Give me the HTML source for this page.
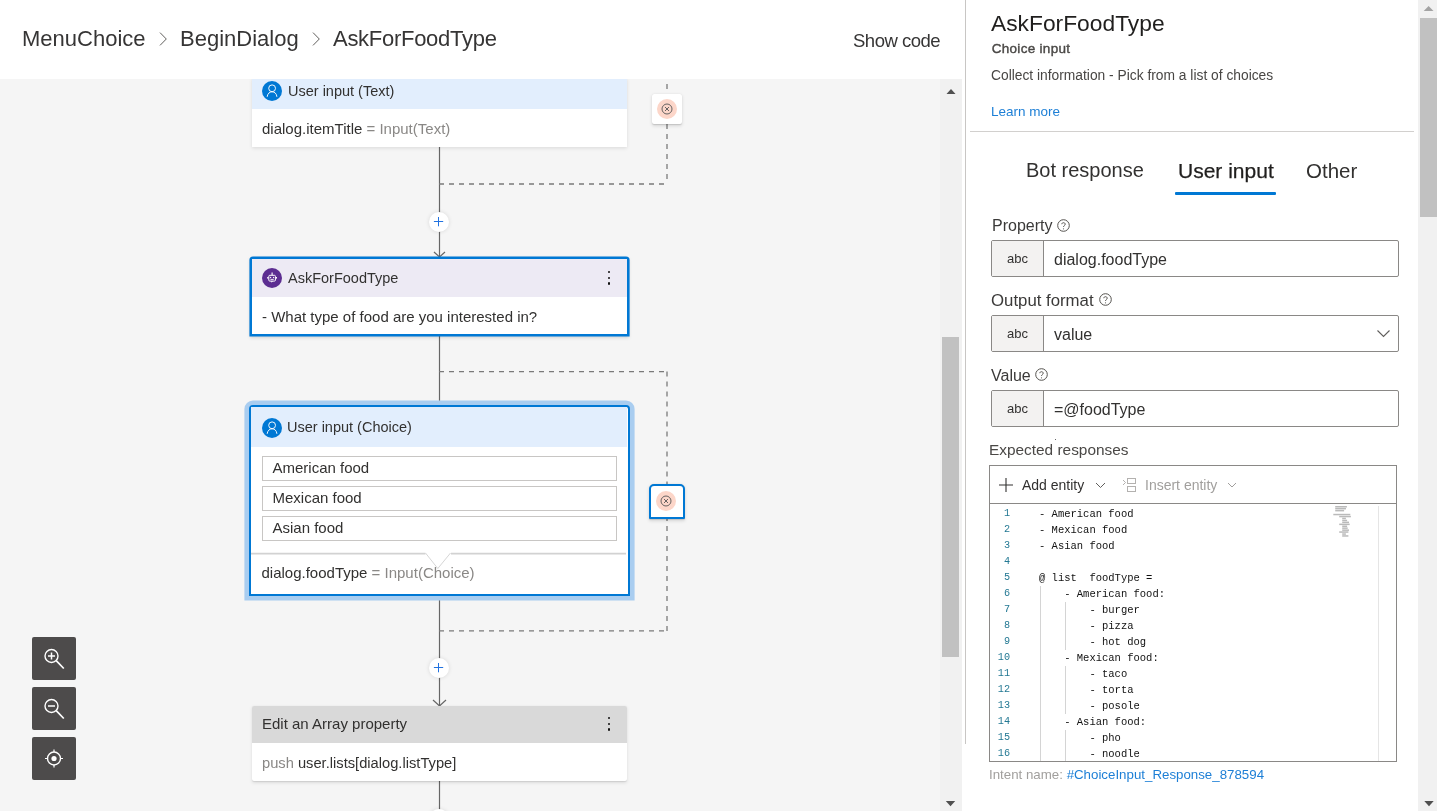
<!DOCTYPE html>
<html><head><meta charset="utf-8">
<style>
*{box-sizing:border-box;margin:0;padding:0}
body{will-change:transform} html,body{width:1437px;height:811px;overflow:hidden;background:#fff;font-family:"Liberation Sans",sans-serif;color:#323130}
.abs{position:absolute}
#header{left:0;top:0;width:965px;height:79px;background:#fff}
.crumb{position:absolute;top:25px;font-size:22px;color:#363535;white-space:nowrap;line-height:28px}
.chev{position:absolute;top:31.5px;width:8px;height:14px}
#canvas{left:0;top:79px;width:962px;height:732px;background:#f5f5f5;overflow:hidden}
.node{position:absolute;background:#fff;box-shadow:0 1.6px 3.6px rgba(0,0,0,.1),0 .3px .9px rgba(0,0,0,.08)}
.nh{position:absolute;left:0;right:0;top:0;font-size:14.5px;white-space:nowrap}
.nb{position:absolute;left:0;right:0;font-size:15px;white-space:nowrap}
.ic{position:absolute;width:20px;height:20px;border-radius:50%}
.dots{position:absolute;width:3px}
.dots i{display:block;width:2.4px;height:2.4px;border-radius:50%;background:#111;margin-bottom:3.2px}
.gray{color:#8a8886}
.choice{position:absolute;left:10.5px;width:355px;height:25px;border:1px solid #c8c6c4;font-size:15px;padding-left:10px;line-height:23px}
.plus{position:absolute;width:20px;height:20px;border-radius:50%;background:#fff;box-shadow:0 0 4px rgba(0,0,0,.12)}
.exc{position:absolute;width:30px;height:30px;background:#fff;border-radius:2px;box-shadow:0 1.6px 3.6px rgba(0,0,0,.13),0 .3px .9px rgba(0,0,0,.11)}
.zbtn{position:absolute;left:32px;width:44px;height:43px;background:#4d4b4b;border-radius:2px}
#panel{left:965px;top:0;width:472px;height:811px;background:#fff}
.lbl{position:absolute;font-size:16px;color:#3b3a39;white-space:nowrap}
.inp{position:absolute;left:26px;width:408px;height:37px;border:1px solid #8a8886;border-radius:2px;background:#fff}
.inp .pre{position:absolute;left:0;top:0;bottom:0;width:52px;background:#f3f2f1;border-right:1px solid #8a8886;font-size:13px;color:#323130;text-align:center;line-height:36px}
.inp .val{position:absolute;left:62px;top:0;font-size:16px;line-height:38px;white-space:nowrap}
.help{display:inline-block;position:absolute;width:13px;height:13px}
.code{position:absolute;font-family:"Liberation Mono",monospace;font-size:10.5px;line-height:16px;white-space:pre;color:#111}
.ln{position:absolute;font-family:"Liberation Mono",monospace;font-size:10.2px;line-height:16px;white-space:pre;color:#237893;text-align:right}
</style></head>
<body>
<div id="header" class="abs">
  <div class="crumb" style="left:22px">MenuChoice</div>
  <svg class="chev" style="left:159px" viewBox="0 0 8 14"><path d="M1 0.6 L7.3 7 L1 13.4" fill="none" stroke="#605e5c" stroke-width="1"/></svg>
  <div class="crumb" style="left:180px">BeginDialog</div>
  <svg class="chev" style="left:312px" viewBox="0 0 8 14"><path d="M1 0.6 L7.3 7 L1 13.4" fill="none" stroke="#605e5c" stroke-width="1"/></svg>
  <div class="crumb" style="left:333px;letter-spacing:-0.28px">AskForFoodType</div>
  <div class="abs" style="left:853px;top:29.5px;font-size:18.5px;letter-spacing:-0.5px;color:#363535;white-space:nowrap">Show code</div>
</div>

<div id="canvas" class="abs">
  <!-- connectors (coords relative to canvas: y-79) -->
  <svg class="abs" style="left:0;top:0" width="962" height="732">
    <g stroke="#666" stroke-width="1.2" fill="none">
      <path d="M439.5 68 V178"/>
      <path d="M434 173 L439.5 178 L445 173"/>
      <path d="M439.5 257 V326"/>
      <path d="M439.5 517 V627"/>
      <path d="M433 621 L439.5 627 L446 621"/>
      <path d="M439.5 702 V732"/>
    </g>
    <g stroke="#7a7a7a" stroke-width="1.3" fill="none" stroke-dasharray="5 5">
      <path d="M439 105 H667"/>
      <path d="M667 105 V0" stroke-dashoffset="5"/>
      <path d="M439 292.6 H667"/>
      <path d="M667 292.6 V422"/>
      <path d="M667 552 V422"/>
      <path d="M439 551.8 H667"/>
    </g>
  </svg>

  <!-- Node 1: User input (Text) -->
  <div class="node" style="left:252px;top:-2px;width:375px;height:70px">
    <div class="nh" style="height:32px;background:#e2eefd">
      <div class="ic" style="left:10px;top:4px;background:#0078d4">
        <svg width="20" height="20" viewBox="0 0 20 20"><circle cx="10.1" cy="7.3" r="3.4" fill="none" stroke="#fff" stroke-width=".95"/><path d="M5.2 15.8 C5.5 12.6 7.6 10.8 10.1 10.8 C12.6 10.8 14.6 12.6 14.9 15.8" fill="none" stroke="#fff" stroke-width=".95"/></svg>
      </div>
      <div class="abs" style="left:36px;top:5px;line-height:18px">User input (Text)</div>
    </div>
    <div class="nb" style="top:33px;height:37px;padding-left:10px;line-height:38px">dialog.itemTitle <span class="gray">= Input(Text)</span></div>
  </div>
  <div class="exc" style="left:652px;top:15px">
    <div class="abs" style="left:5px;top:5px;width:20px;height:20px;border-radius:50%;background:#fcd6c9"></div>
    <svg class="abs" style="left:5px;top:5px" width="20" height="20" viewBox="0 0 20 20"><circle cx="10" cy="10" r="5" fill="none" stroke="#555" stroke-width="0.9"/><path d="M8 8 L12 12 M12 8 L8 12" stroke="#555" stroke-width="0.9"/></svg>
  </div>

  <!-- plus 1 -->
  <div class="plus" style="left:429px;top:133px">
    <svg width="20" height="20" viewBox="0 0 20 20"><path d="M9.5 5 V14.3 M4.9 9.5 H14.2" stroke="#2172e0" stroke-width="1"/></svg>
  </div>

  <!-- Node 2: AskForFoodType -->
  <div class="node" style="left:250px;top:178px;width:379px;height:79px;border:2px solid #0078d4;border-radius:3px 3px 0 0;box-shadow:0 0 0 .6px #0078d4,0 1.6px 3.6px rgba(0,0,0,.13)">
    <div class="nh" style="height:38px;background:#edeaf4">
      <div class="ic" style="left:10px;top:9px;background:#5c2d91">
        <svg width="20" height="20" viewBox="0 0 20 20"><rect x="6.8" y="7.3" width="6.6" height="5.8" rx="1" fill="none" stroke="#fff" stroke-width="1"/><path d="M10.1 4.6 V7.3" stroke="#fff" stroke-width="1.1"/><circle cx="8.6" cy="9.5" r=".65" fill="#fff"/><circle cx="11.6" cy="9.5" r=".65" fill="#fff"/><path d="M8.5 11.4 H11.7" stroke="#fff" stroke-width=".9"/><rect x="5.2" y="9" width="1.2" height="1.6" fill="#fff"/><rect x="13.8" y="9" width="1.2" height="1.6" fill="#fff"/><path d="M9.3 13 L10.9 13 L9.6 14.8 Z" fill="#fff"/></svg>
      </div>
      <div class="abs" style="left:36px;top:10px;line-height:18px">AskForFoodType</div>
      <div class="dots" style="left:356px;top:12px"><i></i><i></i><i></i></div>
    </div>
    <div class="nb" style="top:39px;height:36px;padding-left:10px;line-height:37px">- What type of food are you interested in?</div>
  </div>

  <!-- Node 3: User input (Choice) -->
  <div class="abs" style="left:249px;top:326px;width:381px;height:191px;border:2.5px solid #0078d4;border-radius:4px 4px 0 0;background:#fff;box-shadow:0 0 0 4.6px #a9cdf0;">
    <div class="abs" style="left:0;top:0;width:376px;height:186px;background:#fff;overflow:hidden">
      <div class="nh" style="height:40px;background:#e2eefd">
        <div class="ic" style="left:10.5px;top:11px;background:#0078d4">
          <svg width="20" height="20" viewBox="0 0 20 20"><circle cx="10.1" cy="7.3" r="3.4" fill="none" stroke="#fff" stroke-width=".95"/><path d="M5.2 15.8 C5.5 12.6 7.6 10.8 10.1 10.8 C12.6 10.8 14.6 12.6 14.9 15.8" fill="none" stroke="#fff" stroke-width=".95"/></svg>
        </div>
        <div class="abs" style="left:36px;top:11px;line-height:18px">User input (Choice)</div>
      </div>
      <div class="choice" style="top:49px;line-height:22px">American food</div>
      <div class="choice" style="top:79px;line-height:22px">Mexican food</div>
      <div class="choice" style="top:109px;line-height:22px">Asian food</div>
      <svg class="abs" style="left:0;top:139.5px" width="375" height="22"><path d="M0 6.6 H174.5" stroke="#d2d2d2" stroke-width="1.6"/><path d="M200 6.6 H375" stroke="#d2d2d2" stroke-width="1.6"/><path d="M174.5 6 L186.8 21.5 L199.5 6" fill="none" stroke="#d6d6d6" stroke-width="1"/></svg>
      <div class="nb" style="top:147px;height:39px;padding-left:10.5px;line-height:38px">dialog.foodType <span class="gray">= Input(Choice)</span></div>
    </div>
  </div>
  <div class="exc" style="left:649.2px;top:405px;width:35.5px;height:35px;border:2.5px solid #0078d4;border-radius:5px 5px 1px 1px">
    <div class="abs" style="left:5px;top:5px;width:20px;height:20px;border-radius:50%;background:#fcd6c9"></div>
    <svg class="abs" style="left:5px;top:5px" width="20" height="20" viewBox="0 0 20 20"><circle cx="10" cy="10" r="5" fill="none" stroke="#555" stroke-width="0.9"/><path d="M8 8 L12 12 M12 8 L8 12" stroke="#555" stroke-width="0.9"/></svg>
  </div>

  <!-- plus 2 -->
  <div class="plus" style="left:429px;top:579px">
    <svg width="20" height="20" viewBox="0 0 20 20"><path d="M9.5 5 V14.3 M4.9 9.5 H14.2" stroke="#2172e0" stroke-width="1"/></svg>
  </div>

  <!-- Node 4: Edit an Array property -->
  <div class="node" style="left:252px;top:627px;width:375px;height:75px;border-radius:2px">
    <div class="nh" style="height:37px;background:#d9d9d9;border-radius:2px 2px 0 0">
      <div class="abs" style="left:10px;top:9px;line-height:18px;font-size:15px">Edit an Array property</div>
      <div class="dots" style="left:356px;top:11px"><i></i><i></i><i></i></div>
    </div>
    <div class="nb" style="top:38px;height:37px;padding-left:10px;line-height:38px;font-size:14.7px"><span class="gray">push</span> user.lists[dialog.listType]</div>
  </div>
  <div class="plus" style="left:429px;top:730px"></div>

  <!-- zoom buttons -->
  <div class="zbtn" style="top:558px">
    <svg width="44" height="43" viewBox="0 0 44 43"><circle cx="19.5" cy="19" r="6.5" fill="none" stroke="#fff" stroke-width="1.4"/><path d="M24.2 23.7 L31.8 31.5" stroke="#fff" stroke-width="1.7"/><path d="M19.5 15.5 V22.5 M16 19 H23" stroke="#fff" stroke-width="1.5"/></svg>
  </div>
  <div class="zbtn" style="top:608px">
    <svg width="44" height="43" viewBox="0 0 44 43"><circle cx="19.5" cy="19" r="6.5" fill="none" stroke="#fff" stroke-width="1.4"/><path d="M24.2 23.7 L31.8 31.5" stroke="#fff" stroke-width="1.7"/><path d="M16 19 H23" stroke="#fff" stroke-width="1.5"/></svg>
  </div>
  <div class="zbtn" style="top:658px">
    <svg width="44" height="43" viewBox="0 0 44 43"><circle cx="22" cy="21.5" r="6.5" fill="none" stroke="#fff" stroke-width="1.4"/><circle cx="22" cy="21.5" r="2.6" fill="#fff"/><path d="M22 12.5 V15 M22 28 V30.5 M13 21.5 H15.5 M28.5 21.5 H31" stroke="#fff" stroke-width="1.2"/></svg>
  </div>

  <!-- canvas scrollbar -->
  <div class="abs" style="left:940px;top:0;width:22px;height:732px;background:#f1f1f1"></div>
  <div class="abs" style="left:942px;top:258px;width:17px;height:320px;background:#c1c1c1"></div>
  <svg class="abs" style="left:944px;top:8px" width="14" height="8" viewBox="0 0 14 8"><path d="M2.5 7 L7 2 L11.5 7 Z" fill="#505050"/></svg>
  <svg class="abs" style="left:944px;top:721px" width="14" height="8" viewBox="0 0 14 8"><path d="M1.8 1 L6.5 6.3 L11.2 1 Z" fill="#505050"/></svg>
</div>

<!-- panel -->
<div id="panel" class="abs">
  <div class="abs" style="left:0;top:0;width:1px;height:744px;background:#c8c6c4"></div>
  <div class="abs" style="left:26px;top:9px;font-size:22.8px;line-height:28px;color:#201f1e;white-space:nowrap">AskForFoodType</div>
  <div class="abs" style="left:26.7px;top:41px;font-size:13.5px;letter-spacing:0.3px;-webkit-text-stroke:0.4px #4a4846;color:#4a4846;white-space:nowrap">Choice input</div>
  <div class="abs" style="left:26px;top:68px;font-size:13.8px;color:#484644;white-space:nowrap">Collect information - Pick from a list of choices</div>
  <div class="abs" style="left:26px;top:104px;font-size:13.5px;color:#1d7fd6;white-space:nowrap">Learn more</div>
  <div class="abs" style="left:5px;top:131px;width:444px;height:1px;background:#d2d0ce"></div>

  <div class="abs" style="left:61px;top:159px;font-size:20px;color:#323130;white-space:nowrap">Bot response</div>
  <div class="abs" style="left:213px;top:159px;font-size:21px;color:#201f1e;-webkit-text-stroke:0.25px #201f1e;white-space:nowrap">User input</div>
  <div class="abs" style="left:210px;top:192px;width:101px;height:3px;background:#0078d4;border-radius:1px"></div>
  <div class="abs" style="left:341px;top:159px;font-size:20.5px;color:#323130;white-space:nowrap">Other</div>

  <div class="lbl" style="left:27px;top:217px">Property</div>
  <svg class="help" style="left:92px;top:219px" viewBox="0 0 13 13"><circle cx="6.5" cy="6.5" r="5.8" fill="none" stroke="#55534f" stroke-width="1"/><path d="M4.8 5.2 C4.8 3.2 8.2 3.2 8.2 5.2 C8.2 6.6 6.5 6.5 6.5 8" fill="none" stroke="#55534f" stroke-width="1"/><circle cx="6.5" cy="9.8" r=".6" fill="#605e5c"/></svg>
  <div class="inp" style="top:240px"><div class="pre">abc</div><div class="val">dialog.foodType</div></div>

  <div class="lbl" style="left:26px;top:291px;font-size:16.8px">Output format</div>
  <svg class="help" style="left:133.5px;top:293px" viewBox="0 0 13 13"><circle cx="6.5" cy="6.5" r="5.8" fill="none" stroke="#55534f" stroke-width="1"/><path d="M4.8 5.2 C4.8 3.2 8.2 3.2 8.2 5.2 C8.2 6.6 6.5 6.5 6.5 8" fill="none" stroke="#55534f" stroke-width="1"/><circle cx="6.5" cy="9.8" r=".6" fill="#605e5c"/></svg>
  <div class="inp" style="top:315px"><div class="pre">abc</div><div class="val">value</div>
    <svg class="abs" style="left:384px;top:11px" width="16" height="12" viewBox="0 0 16 12"><path d="M1.5 3.5 L7.5 9.5 L13.5 3.5" fill="none" stroke="#605e5c" stroke-width="1.1"/></svg>
  </div>

  <div class="lbl" style="left:26px;top:367px">Value</div>
  <svg class="help" style="left:70px;top:368px" viewBox="0 0 13 13"><circle cx="6.5" cy="6.5" r="5.8" fill="none" stroke="#55534f" stroke-width="1"/><path d="M4.8 5.2 C4.8 3.2 8.2 3.2 8.2 5.2 C8.2 6.6 6.5 6.5 6.5 8" fill="none" stroke="#55534f" stroke-width="1"/><circle cx="6.5" cy="9.8" r=".6" fill="#605e5c"/></svg>
  <div class="inp" style="top:390px"><div class="pre">abc</div><div class="val">=@foodType</div></div>

  <div class="lbl" style="left:24px;top:440.5px;font-size:15.4px;color:#4a4846">Expected responses</div>
  <div class="abs" style="left:90px;top:438.5px;width:1.2px;height:1.2px;background:#666"></div>

  <!-- editor -->
  <div class="abs" style="left:24px;top:465px;width:408px;height:297px;border:1px solid #8a8886;background:#fff;overflow:hidden">
    <div class="abs" style="left:0;top:0;width:406px;height:38px;border-bottom:1px solid #8a8886"></div>
    <svg class="abs" style="left:9px;top:12px" width="14" height="14" viewBox="0 0 14 14"><path d="M7 0 V14 M0 7 H14" stroke="#323130" stroke-width="1.1"/></svg>
    <div class="abs" style="left:32px;top:11px;font-size:14px;color:#323130;white-space:nowrap">Add entity</div>
    <svg class="abs" style="left:104.5px;top:16px" width="11" height="7" viewBox="0 0 11 7"><path d="M1 1 L5.5 5.5 L10 1" fill="none" stroke="#605e5c" stroke-width="1"/></svg>
    <svg class="abs" style="left:132px;top:11px" width="16" height="16" viewBox="0 0 16 16"><path d="M1 3 L3.5 5.5 L1 8" fill="none" stroke="#b3b1af" stroke-width="1"/><rect x="5.5" y="1.5" width="8" height="5" fill="none" stroke="#b3b1af" stroke-width="1"/><rect x="5.5" y="9.5" width="8" height="5" fill="none" stroke="#b3b1af" stroke-width="1"/></svg>
    <div class="abs" style="left:155px;top:11px;font-size:14px;color:#a19f9d;white-space:nowrap">Insert entity</div>
    <svg class="abs" style="left:237px;top:16px" width="10" height="7" viewBox="0 0 10 7"><path d="M1 1 L5 5 L9 1" fill="none" stroke="#a19f9d" stroke-width="1"/></svg>

    <div class="ln" style="left:0;top:40px;width:20px">1
2
3
4
5
6
7
8
9
10
11
12
13
14
15
16</div>
    <div class="abs" style="left:50px;top:120px;width:1px;height:176px;background:#d4d4d4"></div>
    <div class="abs" style="left:75px;top:136px;width:1px;height:48px;background:#d4d4d4"></div>
    <div class="abs" style="left:75px;top:200px;width:1px;height:48px;background:#d4d4d4"></div>
    <div class="abs" style="left:75px;top:264px;width:1px;height:32px;background:#d4d4d4"></div>
    <div class="code" style="left:49px;top:40px">- American food
- Mexican food
- Asian food

@ list  foodType =
    - American food:
        - burger
        - pizza
        - hot dog
    - Mexican food:
        - taco
        - torta
        - posole
    - Asian food:
        - pho
        - noodle</div>
    <div class="abs" style="left:388px;top:40px;width:1px;height:260px;background:#e5e5e5"></div>
    <svg class="abs" style="left:343px;top:40px" width="20" height="32" viewBox="0 0 20 32"><g fill="#777" opacity=".5"><rect x="2.2" y="0.0" width="11.7" height="1.5"/><rect x="2.2" y="1.9" width="10.8" height="1.5"/><rect x="2.2" y="3.9" width="8.9" height="1.5"/><rect x="0.3" y="7.8" width="17.0" height="1.5"/><rect x="6.2" y="9.8" width="11.7" height="1.5"/><rect x="9.2" y="11.7" width="3.7" height="1.5"/><rect x="9.2" y="13.7" width="4.9" height="1.5"/><rect x="9.2" y="15.6" width="6.8" height="1.5"/><rect x="6.2" y="17.6" width="10.5" height="1.5"/><rect x="9.2" y="19.5" width="4.9" height="1.5"/><rect x="9.2" y="21.4" width="5.5" height="1.5"/><rect x="9.2" y="23.4" width="6.8" height="1.5"/><rect x="6.2" y="25.3" width="9.2" height="1.5"/><rect x="9.2" y="27.3" width="3.7" height="1.5"/><rect x="9.2" y="29.2" width="6.2" height="1.5"/></g></svg>
  </div>
  <div class="abs" style="left:24px;top:767px;font-size:13.3px;color:#a19f9d;white-space:nowrap">Intent name: <span style="color:#1d7fd6">#ChoiceInput_Response_878594</span></div>

  <!-- panel scrollbar -->
  <div class="abs" style="left:453px;top:0;width:19px;height:811px;background:#f1f1f1"></div>
  <div class="abs" style="left:455px;top:18px;width:17px;height:199px;background:#c1c1c1"></div>
  <svg class="abs" style="left:456px;top:4px" width="14" height="8" viewBox="0 0 14 8"><path d="M2.7 7 L7.6 2 L12.5 7 Z" fill="#a3a3a3"/></svg>
  <svg class="abs" style="left:456.5px;top:800px" width="14" height="8" viewBox="0 0 14 8"><path d="M2.3 1 L7 6.2 L11.7 1 Z" fill="#505050"/></svg>
</div>
</body></html>
